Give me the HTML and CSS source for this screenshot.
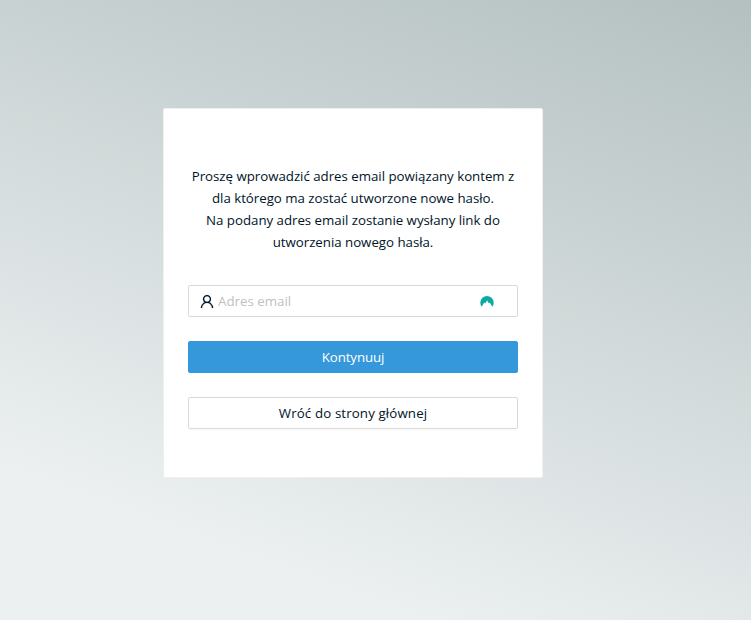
FILE: index.html
```html
<!DOCTYPE html>
<html lang="pl">
<head>
<meta charset="utf-8">
<title>Nowe hasło</title>
<link rel="stylesheet" href="styles.css">
</head>
<body>
<main class="card">
  <p class="intro">Proszę wprowadzić adres email powiązany kontem z<br>dla którego ma zostać utworzone nowe hasło.<br>Na podany adres email zostanie wysłany link do<br>utworzenia nowego hasła.</p>
  <form class="form">
    <label class="field">
      <svg class="user" viewBox="85 60 854 904" aria-hidden="true"><path d="M858.500 763.600a374 374 0 0 0-80.600-119.500 375.630 375.630 0 0 0-119.500-80.600c-.4-.2-.8-.3-1.200-.5C719.500 518 760 444.700 760 362c0-137-111-248-248-248S264 225 264 362c0 82.700 40.500 156 102.800 201.100-.4.2-.8.3-1.200.5-44.800 18.900-85 46-119.500 80.600a375.630 375.630 0 0 0-80.600 119.500A371.700 371.700 0 0 0 136 901.800a8 8 0 0 0 8 8.200h60c4.400 0 7.900-3.500 8-7.800 2-77.200 33-149.500 87.800-204.300 56.700-56.700 132-87.900 212.200-87.900s155.500 31.200 212.200 87.900C779 752.700 810 825 812 902.200c.1 4.400 3.600 7.800 8 7.800h60a8 8 0 0 0 8-8.200c-1-47.800-10.900-94.300-29.500-138.200zM512 534c-45.900 0-89.100-17.900-121.600-50.400S340 407.900 340 362c0-45.900 17.900-89.100 50.400-121.600S466.100 190 512 190s89.100 17.900 121.600 50.400S684 316.100 684 362c0 45.900-17.900 89.100-50.400 121.600S557.900 534 512 534z"/></svg>
      <input class="input" type="text" placeholder="Adres email">
      <svg class="vault" viewBox="0 0 14 12" aria-hidden="true"><path d="M1.700 11.800A6.700 6.700 0 1 1 12.300 11.800L9.700 7.400 8.900 8.600 7.100 5.600 5.300 8.600 4.300 7.400Z"/></svg>
    </label>
    <button class="btn primary" type="button">Kontynuuj</button>
    <button class="btn" type="button">Wróć do strony głównej</button>
  </form>
</main>
</body>
</html>
```
FILE: styles.css
```css
* { box-sizing: border-box; }
body {
  margin: 0;
  height: 620px;
  overflow: hidden;
  padding: 108px 208px 0 163px;
  background: linear-gradient(20deg, #ecf0f1 17%, #b4c0c0 100%);
  font: 13.3px/22px "Open Sans", "Noto Sans", sans-serif;
  color: #001529;
}
.card {
  width: 380px;
  height: 370px;
  padding: 56px 24px 24px;
  background: #fff;
  border: 1px solid #f0f0f0;
  border-radius: 2px;
}
.intro {
  margin: 0 0 32px;
  text-align: center;
  white-space: nowrap;
  letter-spacing: -.03px;
}
.form { display: flex; flex-direction: column; gap: 24px; }
.field {
  display: flex;
  align-items: center;
  height: 32px;
  padding: 0 23px 0 11px;
  border: 1px solid #d9d9d9;
  border-radius: 2px;
}
.user {
  width: 14px;
  height: 15px;
  flex: none;
  fill: #001529;
  stroke: #001529;
  stroke-width: 8;
  margin-right: 4px;
}
.input {
  flex: 1;
  min-width: 0;
  padding: 0;
  border: 0;
  outline: 0;
  background: none;
  font: inherit;
}
.input::placeholder { color: #bfbfbf; }
.vault { width: 14px; height: 12px; flex: none; fill: #0fa9a4; }
.btn {
  height: 32px;
  padding: 0;
  border: 1px solid #d9d9d9;
  border-radius: 2px;
  background: #fff;
  box-shadow: 0 2px 0 rgba(0, 0, 0, .016);
  color: #001529;
  font: inherit;
  letter-spacing: .12px;
}
.primary {
  border-color: #3498db;
  background: #3498db;
  color: #fff;
  box-shadow: none;
  letter-spacing: -.1px;
}
```
